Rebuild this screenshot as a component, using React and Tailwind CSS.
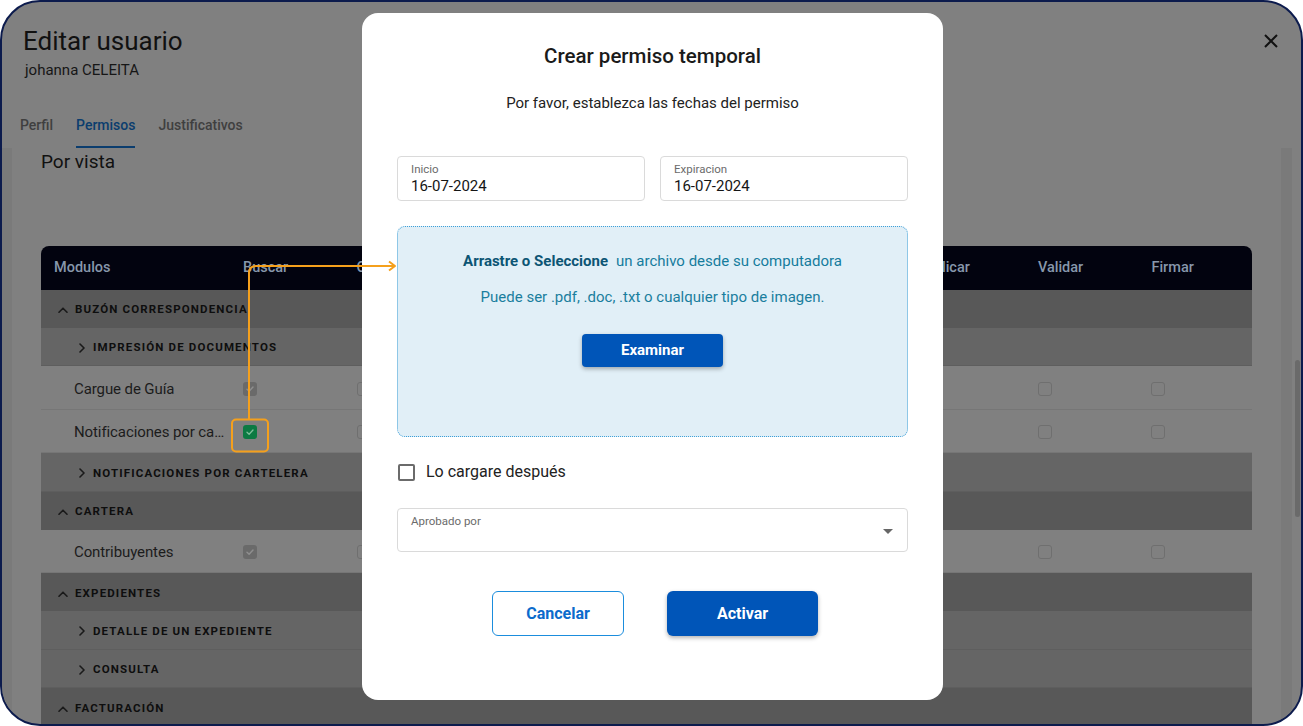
import React from 'react';

const cols = ['Buscar', 'Crear', 'Editar', 'Eliminar', 'Descargar', 'Imprimir', 'Aplicar', 'Validar', 'Firmar'];

const rows = [
  { type: 'g1', label: 'BUZÓN CORRESPONDENCIA' },
  { type: 'g2', label: 'IMPRESIÓN DE DOCUMENTOS' },
  { type: 'item', label: 'Cargue de Guía', first: 'gray' },
  { type: 'item', label: 'Notificaciones por cartelera', first: 'green' },
  { type: 'g2', label: 'NOTIFICACIONES POR CARTELERA' },
  { type: 'g1', label: 'CARTERA' },
  { type: 'item', label: 'Contribuyentes', first: 'gray' },
  { type: 'g1', label: 'EXPEDIENTES' },
  { type: 'g2', label: 'DETALLE DE UN EXPEDIENTE' },
  { type: 'g2', label: 'CONSULTA' },
  { type: 'g1', label: 'FACTURACIÓN' },
];

function Check({ kind }) {
  if (kind === 'gray') {
    return (
      <div className="w-[14px] h-[14px] rounded-[3px] bg-[#6a6a6a] flex items-center justify-center">
        <svg width="10" height="10" viewBox="0 0 10 10" fill="none">
          <path d="M2 5.2 4.1 7.2 8 3" stroke="#8e8e8e" strokeWidth="1.5" strokeLinecap="round" strokeLinejoin="round" />
        </svg>
      </div>
    );
  }
  if (kind === 'green') {
    return (
      <div className="w-[14px] h-[14px] rounded-[3px] bg-[#0c7a42] flex items-center justify-center">
        <svg width="10" height="10" viewBox="0 0 10 10" fill="none">
          <path d="M2 5.2 4.1 7.2 8 3" stroke="#7fbf9b" strokeWidth="1.3" strokeLinecap="round" strokeLinejoin="round" />
        </svg>
      </div>
    );
  }
  return <div className="w-[14px] h-[14px] rounded-[3px] border-[1.5px] border-[#6f6f6f]" />;
}

function ChevronUp() {
  return (
    <svg width="10" height="6" viewBox="0 0 10 6" fill="none">
      <path d="M1 5.2 5 1.2 9 5.2" stroke="#1a1a1a" strokeWidth="1.6" strokeLinecap="round" strokeLinejoin="round" />
    </svg>
  );
}

function ChevronRight() {
  return (
    <svg width="6" height="10" viewBox="0 0 6 10" fill="none">
      <path d="M1 1 5 5 1 9" stroke="#1a1a1a" strokeWidth="1.6" strokeLinecap="round" strokeLinejoin="round" />
    </svg>
  );
}

function PermTable() {
  return (
    <div className="w-full">
      <div className="grid grid-cols-[189px_repeat(9,1fr)] h-[44px] bg-[#02030f] rounded-t-[8px] items-center text-[14.5px] font-medium text-[#8797ab]">
        <div className="pl-[13px]">Modulos</div>
        {cols.map((c) => (
          <div key={c} className="pl-[13px]">{c}</div>
        ))}
      </div>
      {rows.map((r, i) => {
        if (r.type === 'g1') {
          return (
            <div key={i} className="h-[38px] bg-[#585858] flex items-center pt-[3px] pl-[17px] gap-[7px]">
              <ChevronUp />
              <span className="text-[11.5px] font-bold tracking-[0.1em] text-[#0e0e0e]">{r.label}</span>
            </div>
          );
        }
        if (r.type === 'g2') {
          return (
            <div key={i} className="h-[38.5px] bg-[#656565] border-b border-[#5e5e5e] flex items-center pt-[3px] pl-[38px] gap-[8px]">
              <ChevronRight />
              <span className="text-[11.5px] font-bold tracking-[0.1em] text-[#0e0e0e]">{r.label}</span>
            </div>
          );
        }
        return (
          <div key={i} className="grid grid-cols-[189px_repeat(9,1fr)] h-[43.5px] items-center pt-[3px] border-b border-[#767676]">
            <div className="pl-[33px] pr-[1px] text-[15px] tracking-[-0.1px] text-[#1c1c1c] truncate">{r.label}</div>
            {cols.map((c, j) => (
              <div key={c} className="pl-[13px]">
                <Check kind={j === 0 ? r.first : 'none'} />
              </div>
            ))}
          </div>
        );
      })}
    </div>
  );
}

function Modal() {
  return (
    <div className="absolute left-[362px] top-[13px] w-[581px] h-[687px] bg-white rounded-[16px] px-[35px] pt-[31px] flex flex-col">
      <h2 className="text-center text-[20.5px] leading-[24px] font-medium text-[#1a1a1a]">Crear permiso temporal</h2>
      <p className="mt-[25px] text-center text-[15px] leading-[20px] text-[#222]">Por favor, establezca las fechas del permiso</p>

      <div className="mt-[43px] flex gap-[15px]">
        <div className="flex-1 h-[45px] border border-[#dadada] rounded-[4px] px-[13px] pt-[5px]">
          <div className="text-[11.5px] leading-[14px] text-[#6b6b6b]">Inicio</div>
          <div className="mt-[1px] text-[15px] leading-[18px] text-[#151515]">16-07-2024</div>
        </div>
        <div className="flex-1 h-[45px] border border-[#dadada] rounded-[4px] px-[13px] pt-[5px]">
          <div className="text-[11.5px] leading-[14px] text-[#6b6b6b]">Expiracion</div>
          <div className="mt-[1px] text-[15px] leading-[18px] text-[#151515]">16-07-2024</div>
        </div>
      </div>

      <div className="mt-[25px] h-[211px] bg-[#e1eff7] border border-dotted border-[#3d9fd8] rounded-[8px] pt-[24px] flex flex-col items-center">
        <p className="text-[15px] leading-[20px] text-[#157c9d]">
          <span className="font-bold text-[#0c5574]">Arrastre o Seleccione</span>
          <span className="ml-[8px]">un archivo desde su computadora</span>
        </p>
        <p className="mt-[16px] text-[15px] leading-[20px] text-[#1a7e9e]">Puede ser .pdf, .doc, .txt o cualquier tipo de imagen.</p>
        <button className="mt-[27px] w-[141px] h-[33px] bg-[#0055b8] rounded-[4px] text-white text-[15px] font-bold shadow-[0_2px_4px_rgba(0,0,0,0.3)]">
          Examinar
        </button>
      </div>

      <div className="mt-[25px] flex items-center gap-[11px] pl-[1px]">
        <div className="w-[17px] h-[17px] border-2 border-[#6b6b6b] rounded-[2px]" />
        <span className="text-[16px] leading-[20px] text-[#222]">Lo cargare después</span>
      </div>

      <div className="relative mt-[26px] h-[44px] border border-[#dadada] rounded-[4px] px-[13px] pt-[5px]">
        <div className="text-[11.5px] leading-[14px] text-[#6b6b6b]">Aprobado por</div>
        <svg className="absolute right-[14px] top-[20px]" width="10" height="5" viewBox="0 0 10 5">
          <path d="M0 0h10L5 5z" fill="#666" />
        </svg>
      </div>

      <div className="mt-[39px] flex justify-center gap-[43px] pl-[5px]">
        <button className="w-[132px] h-[45px] border border-[#1b8ddd] rounded-[6px] text-[16px] font-bold text-[#0b6bcc]">
          Cancelar
        </button>
        <button className="w-[151px] h-[45px] bg-[#0055b8] rounded-[6px] text-[16px] font-bold text-white shadow-[0_2px_4px_rgba(0,0,0,0.3)]">
          Activar
        </button>
      </div>
    </div>
  );
}

export default function App() {
  return (
    <div className="relative w-[1303px] h-[726px] bg-white overflow-hidden font-['Roboto',sans-serif]">
      <div className="h-full rounded-[40px] border-2 border-[#0c1b4d] bg-[#808080] overflow-hidden flex flex-col">
        <div className="flex justify-between pl-[21px] pr-[23px] pt-[24px]">
          <div>
            <h1 className="text-[26px] leading-[30px] text-[#111]">Editar usuario</h1>
            <div className="mt-[4px] text-[15px] leading-[20px] text-[#161616] pl-[2px]">johanna CELEITA</div>
          </div>
          <svg className="mt-[8px]" width="14" height="14" viewBox="0 0 14 14" fill="none">
            <path d="M1 1 13 13M13 1 1 13" stroke="#111" strokeWidth="2" />
          </svg>
        </div>

        <div className="mt-[35px] flex gap-[23px] pl-[18px] text-[14px] leading-[20px] font-medium">
          <div className="text-[#3f3f3f] pb-[12px]">Perfil</div>
          <div className="text-[#0b3d6e] pb-[10.5px] border-b-2 border-[#0b3d6e]">Permisos</div>
          <div className="text-[#3f3f3f] pb-[12px]">Justificativos</div>
        </div>

        <div className="flex-1 min-h-0 flex">
          <div className="w-[10px] bg-[#7a7a7a]" />
          <div className="flex-1 px-[29px] pt-[2px] overflow-hidden">
            <div className="text-[19px] leading-[24px] text-[#111]">Por vista</div>
            <div className="mt-[72px]">
              <PermTable />
            </div>
          </div>
          <div className="w-[11px] bg-[#7a7a7a]" />
          <div className="w-[9px] relative">
            <div className="absolute left-[3px] top-[212px] w-[5px] h-[157px] rounded-full bg-[#6a6a6a]" />
          </div>
        </div>
      </div>

      <Modal />

      <svg className="absolute inset-0 pointer-events-none" width="1303" height="726" viewBox="0 0 1303 726" fill="none">
        <rect x="232" y="419.5" width="36" height="32" rx="4" stroke="#f5a01c" strokeWidth="2" />
        <path d="M249 419.5V273Q249 266 256 266H395" stroke="#f5a01c" strokeWidth="2" />
        <path d="M389 261.5 395 266 389 270.5" stroke="#f5a01c" strokeWidth="2" strokeLinejoin="round" />
      </svg>
    </div>
  );
}
